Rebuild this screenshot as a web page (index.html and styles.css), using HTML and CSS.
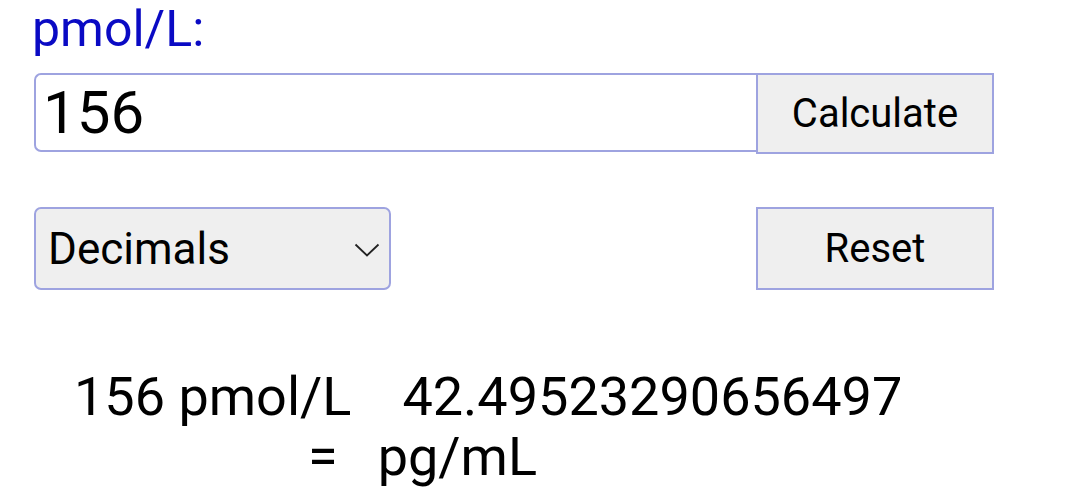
FILE: index.html
```html
<!DOCTYPE html>
<html>
<head>
<meta charset="utf-8">
<link rel="stylesheet" href="styles.css">
</head>
<body>
<div class="page">
  <div class="label">pmol/L:</div>
  <div class="row row-input">
    <div class="input">156</div>
    <div class="btn btn-calc">Calculate</div>
  </div>
  <div class="row row-opts">
    <div class="select">
      <span>Decimals</span>
      <svg class="chev" width="26" height="14" viewBox="0 0 26 14"><path d="M1.5 1.5 L13 12.5 L24.5 1.5" fill="none" stroke="#222" stroke-width="1.8"/></svg>
    </div>
    <div class="btn btn-reset">Reset</div>
  </div>
  <div class="result">
    <div class="line line1"><span>156 pmol/L</span><span class="num">42.49523290656497</span></div>
    <div class="line line2"><span>=</span><span class="unit">pg/mL</span></div>
  </div>
</div>
</body>
</html>
```
FILE: styles.css
```css
html, body {
  margin: 0;
  padding: 0;
  background: #ffffff;
}
body {
  font-family: Roboto, "Liberation Sans", sans-serif;
  color: #000;
}
.page {
  padding-left: 34px;
  width: 960px;
}
.label {
  font-size: 50px;
  line-height: 58px;
  color: #0a0ac4;
  margin-left: -2px;
}
.row {
  display: flex;
  align-items: flex-start;
}
.row-input {
  margin-top: 15px;
}
.input {
  box-sizing: border-box;
  width: 722px;
  height: 79px;
  border: 2px solid #9ea3e0;
  border-radius: 7px 0 0 7px;
  border-right: none;
  font-size: 60px;
  line-height: 75px;
  padding-left: 7px;
}
.btn {
  box-sizing: border-box;
  width: 238px;
  border: 2px solid #9ea3e0;
  background: #efefef;
  font-size: 40px;
  display: flex;
  align-items: center;
  justify-content: center;
}
.btn-calc {
  height: 81px;
}
.row-opts {
  margin-top: 53px;
  justify-content: space-between;
}
.select {
  box-sizing: border-box;
  width: 357px;
  height: 83px;
  border: 2px solid #9ea3e0;
  border-radius: 7px;
  background: #efefef;
  font-size: 44px;
  display: flex;
  align-items: center;
  justify-content: space-between;
  padding: 0 9px 0 12px;
}
.chev {
  display: block;
  margin-top: 2px;
}
.btn-reset {
  height: 83px;
}
.result {
  margin-top: 77px;
  font-size: 54px;
  line-height: 60px;
}
.line {
  display: flex;
}
.line1 {
  padding-left: 40px;
}
.line1 .num {
  margin-left: 51px;
}
.line2 {
  padding-left: 274px;
}
.line2 .unit {
  margin-left: 40px;
}
```
